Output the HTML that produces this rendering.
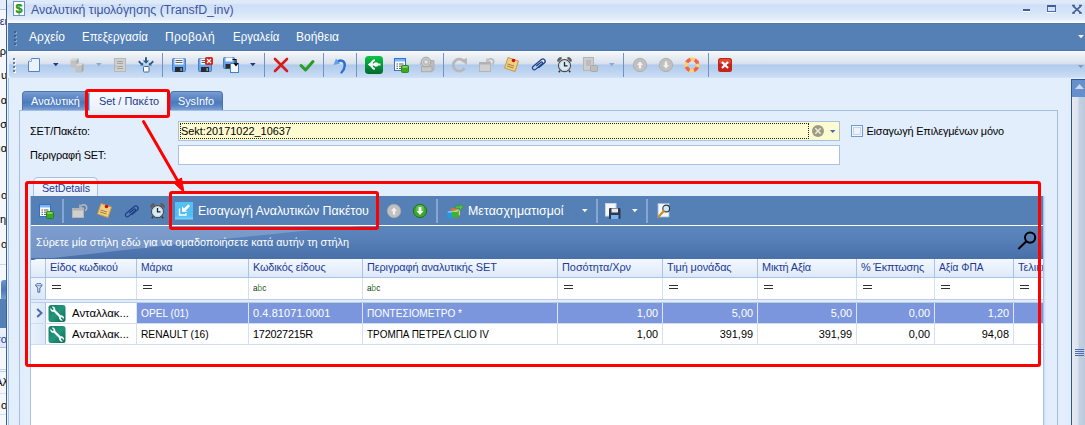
<!DOCTYPE html>
<html><head><meta charset="utf-8">
<style>
*{margin:0;padding:0;box-sizing:border-box}
html,body{width:1085px;height:425px;overflow:hidden;background:#e3eefc;font-family:"Liberation Sans",sans-serif;position:relative}
.a{position:absolute}
.t{position:absolute;white-space:nowrap;line-height:1}
svg{position:absolute;overflow:visible}
</style></head><body>
<div class="a" style="left:0;top:0;width:6px;height:425px;background:#f4f8fd;overflow:hidden"><div class="a" style="left:0;top:0;width:6px;height:9px;background:#e4edf9"></div><div class="a" style="left:0;top:9px;width:6px;height:1px;background:#b3c8e6"></div><div class="a" style="left:0;top:264px;width:6px;height:1px;background:#c5d6ee"></div><div class="a" style="left:1px;top:280px;width:6px;height:20px;border-radius:3px 0 0 0;background:linear-gradient(#6f95cb,#4d7abb 50%,#7ea2d6)"></div><div class="a" style="left:0;top:299px;width:6px;height:29px;background:#5580b5"></div><div class="a" style="left:0;top:328px;width:6px;height:19px;background:linear-gradient(#edf3fc,#dce7f7)"></div><div class="a" style="left:0;top:347px;width:6px;height:1px;background:#a9c2e6"></div><div class="a" style="left:0;top:369px;width:6px;height:1px;background:#bcd0ec"></div><div class="a" style="left:0;top:371px;width:6px;height:1px;background:#bcd0ec"></div><div class="a" style="left:0;top:393px;width:6px;height:1px;background:#d3e0f2"></div><div class="a" style="left:0;top:414px;width:6px;height:1px;background:#d3e0f2"></div><div class="t" style="right:-1px;top:16px;font-size:11px;color:#1b2d7a">ει</div><div class="t" style="right:0px;top:46px;font-size:11px;color:#000">ρ</div><div class="t" style="right:-1px;top:70px;font-size:11px;color:#000">υ</div><div class="t" style="right:-1px;top:95px;font-size:11px;color:#000">α</div><div class="t" style="right:-1px;top:119px;font-size:11px;color:#000">σ</div><div class="t" style="right:-1px;top:143px;font-size:11px;color:#000">μα</div><div class="t" style="right:-1px;top:190px;font-size:11px;color:#000">ο</div><div class="t" style="right:0px;top:214px;font-size:11px;color:#000">η</div><div class="t" style="right:-1px;top:239px;font-size:11px;color:#000">ο</div><div class="t" style="right:-1px;top:334px;font-size:11px;color:#1b3a94">σο</div><div class="t" style="right:-2px;top:377px;font-size:11px;color:#000">Αλ</div><div class="t" style="right:-1px;top:400px;font-size:11px;color:#000">ο</div></div>
<div class="a" style="left:6px;top:0;width:1px;height:425px;background:#3d6097"></div>
<div class="a" style="left:7px;top:0;width:1078px;height:23px;background:linear-gradient(#e0ebf9 0,#dfeaf9 3px,#cfdff6 5px,#d5e4f8 12px,#e3edfa 19px,#eef5fd 21px,#fbfdff 22.5px)"></div>
<div class="a" style="left:13px;top:1px;width:12px;height:15px;background:#fff;border:1px solid #6f93c6"></div>
<div class="t" style="left:15.5px;top:2.5px;font-size:12.5px;font-weight:bold;color:#2f9a1f;text-shadow:0 0 0.4px #2f9a1f">$</div>
<div class="t" style="left:31.0px;top:4.0px;font-size:12.3px;color:#3a55a0">Αναλυτική τιμολόγησης (TransfD_inv)</div>
<div class="a" style="left:1023px;top:9px;width:7px;height:2px;background:#3f5f9a;box-shadow:0 1px 0 #fff"></div>
<div class="a" style="left:1047px;top:5px;width:9px;height:7px;border:1px solid #4a6aa2;border-top:2px solid #3f5f9a;box-shadow:0 1px 0 #fff"></div>
<svg style="left:1072px;top:5px" width="10" height="9"><path d="M1 1L9 8.2M9 1L1 8.2" stroke="#fff" stroke-width="1.8" transform="translate(0,1)"/><path d="M1 1L9 8.2M9 1L1 8.2" stroke="#4565a0" stroke-width="1.8"/><path d="M0 0.3H3M7 0.3H10M0 8.2H3M7 8.2H10" stroke="#3f5f9a" stroke-width="1.2"/></svg>
<div class="a" style="left:8px;top:23px;width:1077px;height:28px;background:#5580b5"></div>
<div class="a" style="left:8px;top:23px;width:1077px;height:1px;background:#4d78b0"></div>
<div class="a" style="left:8px;top:50px;width:1077px;height:1px;background:#4b75ae"></div>
<div class="a" style="left:14px;top:31px;width:2px;height:2px;background:#3f5f8f;box-shadow:1px 1px 0 #8faad0"></div>
<div class="a" style="left:14px;top:35px;width:2px;height:2px;background:#3f5f8f;box-shadow:1px 1px 0 #8faad0"></div>
<div class="a" style="left:14px;top:39px;width:2px;height:2px;background:#3f5f8f;box-shadow:1px 1px 0 #8faad0"></div>
<div class="a" style="left:14px;top:42.6px;width:2px;height:2px;background:#3f5f8f;box-shadow:1px 1px 0 #8faad0"></div>
<div class="t" style="left:29.0px;top:31.0px;font-size:12px;color:#fff;letter-spacing:0.029px">Αρχείο</div>
<div class="t" style="left:82.0px;top:31.0px;font-size:12px;color:#fff;transform:scaleX(0.9546);transform-origin:0 0">Επεξεργασία</div>
<div class="t" style="left:165.0px;top:31.0px;font-size:12px;color:#fff;letter-spacing:0.259px">Προβολή</div>
<div class="t" style="left:232.5px;top:31.0px;font-size:12px;color:#fff;transform:scaleX(0.9542);transform-origin:0 0">Εργαλεία</div>
<div class="t" style="left:296.0px;top:31.0px;font-size:12px;color:#fff">Βοήθεια</div>
<svg style="left:1078px;top:35px" width="6" height="4"><path d="M0 0H6L3 3.2Z" fill="#eef3fa"/></svg>
<div class="a" style="left:9px;top:51px;width:1076px;height:27px;border-radius:4px 0 0 4px;background:linear-gradient(#ffffff 0,#f4f6f9 1px,#e9edf3 6px,#dbe3ee 12px,#d3dded 13px,#afcaec 14px,#bcd3f0 20px,#c8dbf4 25px,#d3e3f7 27px)"></div>
<div class="a" style="left:13px;top:58px;width:2px;height:2px;background:#5f7fad;box-shadow:1px 1px 0 #fff"></div>
<div class="a" style="left:13px;top:62px;width:2px;height:2px;background:#5f7fad;box-shadow:1px 1px 0 #fff"></div>
<div class="a" style="left:13px;top:66px;width:2px;height:2px;background:#5f7fad;box-shadow:1px 1px 0 #fff"></div>
<div class="a" style="left:13px;top:70px;width:2px;height:2px;background:#5f7fad;box-shadow:1px 1px 0 #fff"></div>
<svg style="left:28px;top:58px" width="13" height="15"><path d="M3.5 0.5H11.5V13.5H0.5V3.5Z" fill="#eaf2fb" stroke="#5484c6"/><path d="M0.5 3.5H3.5V0.5" fill="#fff" stroke="#5484c6" stroke-width="0.6"/></svg>
<svg style="left:53px;top:63px" width="6" height="4"><path d="M0 0H5.6L2.8 3.2Z" fill="#1c3a82"/></svg>
<svg style="left:70px;top:58px" width="15" height="15"><path d="M0.5 2.5L2.5 0.5H8.5V7.5L6.5 9.5H0.5Z" fill="#c2c2c2"/><path d="M0.5 2.5L2.5 0.5H8.5L6.5 2.5Z" fill="#dadada"/><path d="M6.5 2.5L8.5 0.5V7.5L6.5 9.5Z" fill="#a9a9a9"/><path d="M5.5 7.5L7.5 5.5H13.5V12.5L11.5 14.5H5.5Z" fill="#c2c2c2"/><path d="M5.5 7.5L7.5 5.5H13.5L11.5 7.5Z" fill="#dadada"/><path d="M11.5 7.5L13.5 5.5V12.5L11.5 14.5Z" fill="#a9a9a9"/></svg>
<svg style="left:96px;top:63px" width="6" height="4"><path d="M0 0H5.6L2.8 3.2Z" fill="#8ea9c9"/></svg>
<svg style="left:114px;top:58px" width="12" height="14"><rect x="0.5" y="0.5" width="11" height="13" fill="#d0d0d0" stroke="#b8b8b8"/><path d="M3 3.5H9M3 5.5H9M3.5 8.5H9M3 10.5H9" stroke="#a3a3a3"/><path d="M0.5 7L2.5 8.5L0.5 10" fill="none" stroke="#b0b0b0" stroke-width="0.8"/></svg>
<svg style="left:138px;top:57px" width="17" height="16"><g stroke="#fff" stroke-width="3.2" opacity="0.7" fill="none"><path d="M8 0.5V5M1 4.5L4 7.5M15 4.5L12 7.5"/></g><path d="M8 0.3V5" stroke="#285a8f" stroke-width="2"/><path d="M4.8 3.6L8 6.8L11.2 3.6Z" fill="#285a8f"/><path d="M0.8 4.3L3.6 7.1" stroke="#285a8f" stroke-width="2"/><path d="M1.8 8.6H5.2V5.2Z" fill="#285a8f"/><path d="M15.2 4.3L12.4 7.1" stroke="#285a8f" stroke-width="2"/><path d="M14.2 8.6H10.8V5.2Z" fill="#285a8f"/><rect x="5.5" y="9.5" width="5.5" height="5.5" rx="0.8" fill="#fff" stroke="#3b6a9c"/></svg>
<div class="a" style="left:162px;top:53px;width:1px;height:24px;background:#6f93c3"></div>
<svg style="left:172px;top:58px" width="14" height="14"><rect x="0.5" y="0.5" width="13" height="13" rx="1" fill="#68a6ec" stroke="#3f7fd0"/><rect x="2.5" y="0.5" width="9" height="6" fill="#fafafa"/><path d="M3.5 2.5H10.5M3.5 4.5H10.5" stroke="#666" stroke-width="1"/><rect x="3" y="9" width="8" height="5" fill="#2b2b2b"/><rect x="8.5" y="10" width="1.2" height="3" fill="#8cc0f0"/></svg>
<svg style="left:198px;top:58px" width="14" height="14"><rect x="0.5" y="0.5" width="13" height="13" rx="1" fill="#68a6ec" stroke="#3f7fd0"/><rect x="2.5" y="0.5" width="9" height="6" fill="#fafafa"/><path d="M3.5 2.5H10.5M3.5 4.5H10.5" stroke="#666" stroke-width="1"/><rect x="3" y="9" width="8" height="5" fill="#2b2b2b"/><rect x="8.5" y="10" width="1.2" height="3" fill="#8cc0f0"/></svg>
<svg style="left:205px;top:57px" width="8" height="8"><rect x="0" y="0" width="8" height="8" rx="1.5" fill="#d6261a"/><path d="M2 2L6 6M6 2L2 6" stroke="#fff" stroke-width="1.3"/></svg>
<svg style="left:223px;top:57px" width="16" height="16"><rect x="0.5" y="0.5" width="11" height="11" rx="1" fill="#68a6ec" stroke="#3f7fd0"/><rect x="2.5" y="0.5" width="7" height="4" fill="#fafafa"/><rect x="2.5" y="7" width="6" height="4.5" fill="#2b2b2b"/><rect x="7.5" y="6.5" width="8" height="9" fill="#f4f7fb" stroke="#3f7fd0"/><path d="M9.5 2.5H13V8M11 6L13 8.5L15 6" fill="none" stroke="#000" stroke-width="1.2"/></svg>
<svg style="left:250px;top:63px" width="6" height="4"><path d="M0 0H5.6L2.8 3.2Z" fill="#1c3a82"/></svg>
<div class="a" style="left:264px;top:53px;width:1px;height:24px;background:#6f93c3"></div>
<svg style="left:273px;top:57px" width="16" height="16"><path d="M2 2L14 14M14 2L2 14" stroke="#d81c1c" stroke-width="2.6" stroke-linecap="round"/></svg>
<svg style="left:299px;top:59px" width="16" height="13"><path d="M2 6.5L6.5 11L14 2.5" fill="none" stroke="#2a9c22" stroke-width="3" stroke-linejoin="round" stroke-linecap="round"/></svg>
<div class="a" style="left:323px;top:53px;width:1px;height:24px;background:#6f93c3"></div>
<svg style="left:332px;top:57px" width="15" height="17"><path d="M5 6C7 2 13 3 12.8 8.5C12.6 12 11 14 9.5 15.5" fill="none" stroke="#2c6fd0" stroke-width="2.4" stroke-linecap="round"/><path d="M1.5 8L4 1.5L8 6.5Z" fill="#5ea2ec"/></svg>
<div class="a" style="left:356px;top:53px;width:1px;height:24px;background:#6f93c3"></div>
<svg style="left:365px;top:56px" width="18" height="18"><defs><linearGradient id="gs" x1="0" y1="0" x2="0" y2="1"><stop offset="0" stop-color="#08c545"/><stop offset="1" stop-color="#006a2c"/></linearGradient></defs><rect x="0" y="0" width="18" height="18" rx="3.5" fill="url(#gs)"/><path d="M9.8 3.8A5 5 0 0 0 9.8 13.2" fill="none" stroke="#fff" stroke-width="1.8"/><path d="M4 8.5H15.5" stroke="#fff" stroke-width="2"/><circle cx="11" cy="8.5" r="2.3" fill="#fff"/><path d="M2.8 8.5L6.8 5.6V11.4Z" fill="#fff"/></svg>
<svg style="left:394px;top:58px" width="15" height="15"><rect x="0.5" y="0.5" width="11" height="12" fill="#fff" stroke="#2d74d0"/><rect x="1" y="1" width="10" height="2.5" fill="#7fb6ee"/><path d="M2.5 6H4M5 6H9.5M2.5 8.2H4M5 8.2H9.5M2.5 10.4H4M5 10.4H8" stroke="#444" stroke-width="0.9"/><rect x="7.5" y="7.5" width="7" height="7" rx="1" fill="#3caa1e" stroke="#237a12" stroke-width="0.8"/><rect x="8.5" y="8.2" width="5" height="1.5" fill="#8ee06a"/></svg>
<svg style="left:419px;top:57px" width="16" height="16"><path d="M10.5 3.5H15V12.5L13 14.5H10.5Z" fill="#bdbdbd" stroke="#a9a9a9" stroke-width="0.8"/><rect x="2.5" y="9.7" width="10.5" height="5" fill="#c8c8c8" stroke="#acacac"/><circle cx="7" cy="5" r="4.8" fill="#cacaca" stroke="#a6a6a6"/><circle cx="7" cy="5" r="2.6" fill="none" stroke="#b4b4b4" stroke-width="0.8"/><path d="M6.2 3.6L8.8 5L6.2 6.4Z" fill="#f0f0f0"/><path d="M0.3 7L2.2 5.4V8.6Z" fill="#b4b4b4"/></svg>
<div class="a" style="left:443px;top:53px;width:1px;height:24px;background:#6f93c3"></div>
<svg style="left:452px;top:57px" width="16" height="15"><path d="M12 4.5A6 6 0 1 0 12.5 11" fill="none" stroke="#b8b8b8" stroke-width="2.8"/><path d="M9 3.5L15 1V8Z" fill="#b8b8b8"/></svg>
<svg style="left:479px;top:57px" width="16" height="15"><rect x="0.5" y="5.5" width="11" height="9" fill="#d0d0d0" stroke="#b5b5b5"/><rect x="0.5" y="5.5" width="11" height="2" fill="#b0b0b0"/><path d="M9 3.5A3 3 0 1 1 13 7.5" fill="none" stroke="#b8b8b8" stroke-width="1.6"/><path d="M8 1.5V5H11.5" fill="none" stroke="#b8b8b8" stroke-width="1.4"/></svg>
<svg style="left:504px;top:57px" width="15" height="15"><path d="M4 0.5L14.5 4L11 14.5L0.5 11Z" fill="#f0d080" stroke="#c9974a"/><path d="M3.5 7L10 9M3 9L9.5 11" stroke="#8a6a30" stroke-width="0.8"/><circle cx="9.5" cy="3.5" r="1.8" fill="#d01010"/></svg>
<svg style="left:532px;top:58px" width="14" height="13"><g transform="translate(7,6.5) rotate(-40)"><path d="M-2.5 2.3H5A2.3 2.3 0 0 0 5 -2.3H-5.8A1.9 1.9 0 0 0 -5.8 1.5H3A1 1 0 0 0 3 -0.5H-3" fill="none" stroke="#1f3f86" stroke-width="1.25"/></g></svg>
<svg style="left:557px;top:57px" width="15" height="16"><path d="M1.2 4.6A3.6 3.6 0 0 1 4.6 1.2M10.4 1.2A3.6 3.6 0 0 1 13.8 4.6" fill="none" stroke="#5c5c5c" stroke-width="2.3"/><path d="M3 13.6L1.8 15.2M12 13.6L13.2 15.2" stroke="#333" stroke-width="1.5"/><circle cx="7.5" cy="8.6" r="6" fill="#d6edf9" stroke="#4a4a4a" stroke-width="1.2"/><circle cx="7.5" cy="8.6" r="4.9" fill="none" stroke="#cfcfcf" stroke-width="1"/><path d="M7.5 5V8.9H10.5" fill="none" stroke="#222" stroke-width="1.3"/></svg>
<svg style="left:583px;top:57px" width="15" height="15"><rect x="0.5" y="0.5" width="10" height="13" fill="#cdcdcd" stroke="#b5b5b5"/><path d="M3 4H8M3 6H8M3 8H8" stroke="#aaa"/><rect x="7.5" y="8.5" width="7" height="6" rx="1" fill="#bdbdbd" stroke="#aaa"/></svg>
<svg style="left:609px;top:63px" width="6" height="4"><path d="M0 0H5.6L2.8 3.2Z" fill="#8ea9c9"/></svg>
<div class="a" style="left:623px;top:53px;width:1px;height:24px;background:#6f93c3"></div>
<svg style="left:633px;top:58px" width="14" height="14"><circle cx="7" cy="7" r="6.7" fill="#c0c0c0" stroke="#aaa" stroke-width="0.8"/><path d="M7 3.5L10 7H8.2V10.5H5.8V7H4Z" fill="#f2f2f2"/></svg>
<svg style="left:659px;top:58px" width="14" height="14"><circle cx="7" cy="7" r="6.7" fill="#c0c0c0" stroke="#aaa" stroke-width="0.8"/><path d="M7 10.5L10 7H8.2V3.5H5.8V7H4Z" fill="#f2f2f2"/></svg>
<svg style="left:684px;top:57px" width="16" height="16"><circle cx="8" cy="8" r="5.8" fill="none" stroke="#f9d46a" stroke-width="3.6"/><circle cx="8" cy="8" r="5.8" fill="none" stroke="#f2605c" stroke-width="3.6" stroke-dasharray="4.555 4.555" stroke-dashoffset="-2.28"/></svg>
<div class="a" style="left:708px;top:53px;width:1px;height:24px;background:#6f93c3"></div>
<svg style="left:718px;top:58px" width="14" height="14"><rect x="0" y="0" width="14" height="14" rx="2.5" fill="#c42419"/><rect x="1" y="1" width="12" height="5" rx="2" fill="#de4a3a"/><path d="M4 4L10 10M10 4L4 10" stroke="#fff" stroke-width="2.2"/></svg>
<svg style="left:1078px;top:65px" width="6" height="4"><path d="M0 0H5.6L2.8 3.2Z" fill="#7f9cc4"/></svg>
<div class="a" style="left:7px;top:78px;width:1px;height:347px;background:#eaf2fd"></div>
<div class="a" style="left:8px;top:78px;width:1px;height:347px;background:#a8c2e7"></div>
<div class="a" style="left:1071px;top:79px;width:14px;height:346px;background:linear-gradient(90deg,#2f5894 0,#2f5894 1px,#e6eaf0 1px,#dde3eb 7px,#c3d0e1 8px,#bccadd 14px)"></div>
<div class="a" style="left:1071px;top:79px;width:14px;height:18px;background:#6590cc;border-left:1px solid #2f5894;border-top:1px solid #2f5894"></div>
<svg style="left:1075px;top:84px" width="9" height="5"><path d="M0 5L4.5 0L9 5Z" fill="#c8d8ee"/></svg>
<div class="a" style="left:1075px;top:349px;width:9px;height:1px;background:#4d6ea8"></div>
<div class="a" style="left:1075px;top:351px;width:9px;height:1px;background:#4d6ea8"></div>
<div class="a" style="left:1075px;top:353px;width:9px;height:1px;background:#4d6ea8"></div>
<div class="a" style="left:1075px;top:355px;width:9px;height:1px;background:#4d6ea8"></div>
<div class="a" style="left:22px;top:91px;width:67px;height:19px;border-radius:4px 4px 0 0;background:linear-gradient(#7b9fd2 0,#6990ca 3px,#5683c3 8px,#4b79bb 10px,#5b86c3 14px,#87a8da 19px);border:1px solid #4a74b5;border-bottom:none"></div>
<div class="t" style="left:31.0px;top:96.0px;font-size:10.9px;color:#fff;letter-spacing:0.090px">Αναλυτική</div>
<div class="a" style="left:89px;top:92px;width:81px;height:20px;background:linear-gradient(#f7faff,#e9f0fb);border-left:1px solid #a7c0e4;border-right:1px solid #a7c0e4"></div>
<div class="t" style="left:99.0px;top:96.0px;font-size:10.9px;color:#1e3a8a">Set / Πακέτο</div>
<div class="a" style="left:170px;top:91px;width:53px;height:19px;border-radius:4px 4px 0 0;background:linear-gradient(#7b9fd2 0,#6990ca 3px,#5683c3 8px,#4b79bb 10px,#5b86c3 14px,#87a8da 19px);border:1px solid #4a74b5;border-bottom:none"></div>
<div class="t" style="left:178.0px;top:96.0px;font-size:10.9px;color:#fff;letter-spacing:-0.047px">SysInfo</div>
<div class="a" style="left:19px;top:110px;width:1039px;height:330px;border:1px solid #a3bde3;background:#e3eefc"></div>
<div class="a" style="left:90px;top:110px;width:79px;height:2px;background:#e9f0fb"></div>
<div class="t" style="left:30.0px;top:126.0px;font-size:10.9px;color:#000;letter-spacing:-0.125px">ΣΕΤ/Πακέτο:</div>
<div class="t" style="left:30.0px;top:150.0px;font-size:10.9px;color:#000;letter-spacing:-0.173px">Περιγραφή SET:</div>
<div class="a" style="left:178px;top:121px;width:662px;height:20px;border:1px solid #a9c0e1;background:#fefbd0"></div>
<div class="a" style="left:180px;top:123px;width:629px;height:16px;border:1px dotted #222"></div>
<div class="t" style="left:181.0px;top:126.0px;font-size:10.9px;color:#000;letter-spacing:0.020px">Sekt:20171022_10637</div>
<svg style="left:812px;top:125px" width="12" height="12"><circle cx="6" cy="6" r="6" fill="#9c9c86"/><path d="M3.3 3.3L8.7 8.7M8.7 3.3L3.3 8.7" stroke="#f4f2dc" stroke-width="1.3"/></svg>
<svg style="left:830px;top:130px" width="6" height="4"><path d="M0 0H5.5L2.75 3Z" fill="#3b6ec0"/></svg>
<div class="a" style="left:178px;top:145px;width:662px;height:20px;border:1px solid #a9c0e1;background:#fff"></div>
<div class="a" style="left:851px;top:125px;width:12px;height:12px;border:1px solid #6d9ad8;background:#f4f8fd"></div>
<div class="a" style="left:853px;top:127px;width:8px;height:8px;border:1px solid #c3d5ee;background:#eef3fb"></div>
<div class="t" style="left:866.5px;top:126.0px;font-size:10.9px;color:#000;letter-spacing:-0.161px">Εισαγωγή Επιλεγμένων μόνο</div>
<div class="a" style="left:33px;top:177px;width:65px;height:21px;border:1px solid #a6c0e4;border-bottom:none;border-radius:5px 5px 0 0;background:linear-gradient(#f8fbff,#e6eefb)"></div>
<div class="t" style="left:42.0px;top:183.0px;font-size:10.7px;color:#1e3c96;letter-spacing:-0.072px">SetDetails</div>
<div class="a" style="left:30px;top:196px;width:1014px;height:240px;background:#fff;border-left:1px solid #a9c2e6;border-right:1px solid #a9c2e6"></div>
<div class="a" style="left:1044px;top:196px;width:2px;height:240px;background:linear-gradient(90deg,#c9daf2,#e3eefc)"></div>
<div class="a" style="left:31px;top:196px;width:1012px;height:29px;background:#5580b5"></div>
<div class="a" style="left:31px;top:225px;width:1012px;height:1px;background:#fff"></div>
<svg style="left:39px;top:204px" width="15" height="15"><rect x="0.5" y="0.5" width="11" height="12" fill="#fff" stroke="#2d74d0"/><rect x="1" y="1" width="10" height="2.5" fill="#7fb6ee"/><path d="M2.5 6H4M5 6H9.5M2.5 8.2H4M5 8.2H9.5M2.5 10.4H4M5 10.4H8" stroke="#444" stroke-width="0.9"/><rect x="7.5" y="7.5" width="7" height="7" rx="1" fill="#3caa1e" stroke="#237a12" stroke-width="0.8"/><rect x="8.5" y="8.2" width="5" height="1.5" fill="#8ee06a"/></svg>
<div class="a" style="left:62px;top:199px;width:2px;height:24px;background:#88a6d1"></div>
<svg style="left:72px;top:203px" width="16" height="15"><rect x="0.5" y="5.5" width="11" height="9" fill="#d0d0d0" stroke="#b5b5b5"/><rect x="0.5" y="5.5" width="11" height="2" fill="#b0b0b0"/><path d="M9 3.5A3 3 0 1 1 13 7.5" fill="none" stroke="#b8b8b8" stroke-width="1.6"/><path d="M8 1.5V5H11.5" fill="none" stroke="#b8b8b8" stroke-width="1.4"/></svg>
<svg style="left:97px;top:203px" width="15" height="15"><path d="M4 0.5L14.5 4L11 14.5L0.5 11Z" fill="#f0d080" stroke="#c9974a"/><path d="M3.5 7L10 9M3 9L9.5 11" stroke="#8a6a30" stroke-width="0.8"/><circle cx="9.5" cy="3.5" r="1.8" fill="#d01010"/></svg>
<svg style="left:125px;top:205px" width="14" height="13"><g transform="translate(7,6.5) rotate(-40)"><path d="M-2.5 2.3H5A2.3 2.3 0 0 0 5 -2.3H-5.8A1.9 1.9 0 0 0 -5.8 1.5H3A1 1 0 0 0 3 -0.5H-3" fill="none" stroke="#1f3f86" stroke-width="1.25"/></g></svg>
<svg style="left:150px;top:203px" width="15" height="16"><path d="M1.2 4.6A3.6 3.6 0 0 1 4.6 1.2M10.4 1.2A3.6 3.6 0 0 1 13.8 4.6" fill="none" stroke="#5c5c5c" stroke-width="2.3"/><path d="M3 13.6L1.8 15.2M12 13.6L13.2 15.2" stroke="#333" stroke-width="1.5"/><circle cx="7.5" cy="8.6" r="6" fill="#d6edf9" stroke="#4a4a4a" stroke-width="1.2"/><circle cx="7.5" cy="8.6" r="4.9" fill="none" stroke="#cfcfcf" stroke-width="1"/><path d="M7.5 5V8.9H10.5" fill="none" stroke="#222" stroke-width="1.3"/></svg>
<svg style="left:175px;top:202px" width="18" height="18"><defs><linearGradient id="ic" x1="0" y1="0" x2="0" y2="1"><stop offset="0" stop-color="#56c0f4"/><stop offset="0.8" stop-color="#52bdf2"/><stop offset="1" stop-color="#7fd6fa"/></linearGradient></defs><rect x="0" y="0" width="18" height="17.5" fill="url(#ic)"/><path d="M4.5 6.5V13H11V11.3" fill="none" stroke="#fff" stroke-width="1.4"/><path d="M14.2 3.2L9.4 8" stroke="#fff" stroke-width="2.6"/><path d="M7 9.8V4.6L12.2 9.8Z" fill="#fff"/></svg>
<div class="t" style="left:198.0px;top:205.0px;font-size:12.4px;color:#fff">Εισαγωγή Αναλυτικών Πακέτου</div>
<svg style="left:387px;top:204px" width="14" height="14"><circle cx="7" cy="7" r="6.7" fill="#c0c0c0" stroke="#aaa" stroke-width="0.8"/><path d="M7 3.5L10 7H8.2V10.5H5.8V7H4Z" fill="#f2f2f2"/></svg>
<svg style="left:413px;top:204px" width="14" height="14"><circle cx="7" cy="7" r="6.6" fill="#3aa82a" stroke="#1d6b16" stroke-width="0.9"/><circle cx="7" cy="5" r="4" fill="#6fd255" opacity="0.6"/><path d="M7 11L10.5 7H8.4V3H5.6V7H3.5Z" fill="#fff"/></svg>
<div class="a" style="left:436px;top:199px;width:2px;height:24px;background:#88a6d1"></div>
<svg style="left:447px;top:203px" width="17" height="15"><rect x="3.5" y="5" width="6.5" height="4.5" rx="1.5" fill="#e4674c"/><rect x="8.5" y="6.5" width="4.5" height="6" rx="1" fill="#f2c77e"/><path d="M0.3 9.6L1.6 8.3H7.3V13.5L6 14.8H0.3Z" fill="#1f9ae6"/><path d="M0.3 9.6L1.6 8.3H7.3L6 9.6Z" fill="#8ad6fb"/><path d="M5 9L6.5 7.6H11.8V13.2L10.3 14.6H5Z" fill="#3fb12a"/><path d="M5 9L6.5 7.6H11.8L10.3 9Z" fill="#9be77a"/><path d="M8.6 3H12.6V0.8L16.3 4.2L12.6 7.6V5.4H8.6Z" fill="#4fc43a" stroke="#2c8e22" stroke-width="0.5"/></svg>
<div class="t" style="left:468.0px;top:205.0px;font-size:12.4px;color:#fff;letter-spacing:0.023px">Μετασχηματισμοί</div>
<svg style="left:582px;top:209px" width="6" height="4"><path d="M0 0H5.6L2.8 3.2Z" fill="#fff"/></svg>
<div class="a" style="left:596px;top:199px;width:2px;height:24px;background:#88a6d1"></div>
<svg style="left:605px;top:203px" width="16" height="16"><rect x="0.5" y="0.5" width="10.5" height="12.5" fill="#f4f6fa" stroke="#c9d3e2"/><rect x="4" y="5" width="11.5" height="11" rx="1" fill="#2d3a4e"/><rect x="6.5" y="5.5" width="6.5" height="4" fill="#e6e9ee"/><rect x="6" y="12" width="7.5" height="4" fill="#6fb3f0"/></svg>
<svg style="left:632px;top:209px" width="6" height="4"><path d="M0 0H5.6L2.8 3.2Z" fill="#fff"/></svg>
<div class="a" style="left:646px;top:199px;width:2px;height:24px;background:#88a6d1"></div>
<svg style="left:657px;top:203px" width="14" height="15"><rect x="1" y="0.5" width="11" height="13.5" fill="#f5f8fc" stroke="#9fb7d8" stroke-width="0.8"/><circle cx="9.2" cy="5.5" r="3.4" fill="#cfe8f8" stroke="#333" stroke-width="1.1"/><path d="M6.8 8L1.5 13.8" stroke="#d08a2a" stroke-width="2.2" stroke-linecap="round"/></svg>
<div class="a" style="left:31px;top:226px;width:1012px;height:34px;background:linear-gradient(#5d86bd 0,#5680b7 38%,#4a70aa 94%,#4a70aa 100%)"></div>
<svg style="left:31px;top:226px" width="1012" height="32"><defs><linearGradient id="gp" x1="0" y1="0" x2="0" y2="1"><stop offset="0" stop-color="#7d9dce"/><stop offset="1" stop-color="#7292c5"/></linearGradient></defs><path d="M0 0H330C250 6 130 20 22 32H0Z" fill="url(#gp)"/></svg>
<div class="t" style="left:36.0px;top:237.0px;font-size:10.85px;color:#fff">Σύρετε μία στήλη εδώ για να ομαδοποιήσετε κατά αυτήν τη στήλη</div>
<svg style="left:1019px;top:232px" width="14" height="18"><circle cx="11.1" cy="5.6" r="5.1" fill="none" stroke="#000" stroke-width="2"/><path d="M-0.6 17L7.4 9.3" stroke="#000" stroke-width="2"/></svg>
<div class="a" style="left:31px;top:258.5px;width:1012px;height:19.5px;background:linear-gradient(#f3f7fe 0,#e9f1fc 50%,#dbe7f8 100%);border-radius:6px 0 0 0"></div>
<div class="a" style="left:31px;top:277px;width:1012px;height:1px;background:#a9c2e6"></div>
<div class="a" style="left:45px;top:259px;width:1px;height:19px;background:#a9c2e6"></div>
<div class="a" style="left:136px;top:259px;width:1px;height:19px;background:#a9c2e6"></div>
<div class="a" style="left:248px;top:259px;width:1px;height:19px;background:#a9c2e6"></div>
<div class="a" style="left:362px;top:259px;width:1px;height:19px;background:#a9c2e6"></div>
<div class="a" style="left:557px;top:259px;width:1px;height:19px;background:#a9c2e6"></div>
<div class="a" style="left:662px;top:259px;width:1px;height:19px;background:#a9c2e6"></div>
<div class="a" style="left:757px;top:259px;width:1px;height:19px;background:#a9c2e6"></div>
<div class="a" style="left:856px;top:259px;width:1px;height:19px;background:#a9c2e6"></div>
<div class="a" style="left:934px;top:259px;width:1px;height:19px;background:#a9c2e6"></div>
<div class="a" style="left:1013px;top:259px;width:1px;height:19px;background:#a9c2e6"></div>
<div class="a" style="left:1013px;top:258px;width:30px;height:20px;overflow:hidden">
<div class="t" style="left:5.0px;top:4.0px;font-size:10.9px;color:#1c3a94">Τελική Αξία</div>
</div>
<div class="t" style="left:50.0px;top:262.0px;font-size:10.9px;color:#1c3a94;letter-spacing:-0.154px">Είδος κωδικού</div>
<div class="t" style="left:141.0px;top:262.0px;font-size:10.9px;color:#1c3a94;transform:scaleX(0.9496);transform-origin:0 0">Μάρκα</div>
<div class="t" style="left:253.0px;top:262.0px;font-size:10.9px;color:#1c3a94;letter-spacing:-0.133px">Κωδικός είδους</div>
<div class="t" style="left:367.0px;top:262.0px;font-size:10.9px;color:#1c3a94;letter-spacing:-0.108px">Περιγραφή αναλυτικής SET</div>
<div class="t" style="left:562.0px;top:262.0px;font-size:10.9px;color:#1c3a94;letter-spacing:-0.023px">Ποσότητα/Χρν</div>
<div class="t" style="left:667.0px;top:262.0px;font-size:10.9px;color:#1c3a94;letter-spacing:-0.102px">Τιμή μονάδας</div>
<div class="t" style="left:762.0px;top:262.0px;font-size:10.9px;color:#1c3a94;letter-spacing:-0.158px">Μικτή Αξία</div>
<div class="t" style="left:861.0px;top:262.0px;font-size:10.9px;color:#1c3a94;letter-spacing:-0.189px">% Έκπτωσης</div>
<div class="t" style="left:939.0px;top:262.0px;font-size:10.9px;color:#1c3a94;transform:scaleX(0.9329);transform-origin:0 0">Αξία ΦΠΑ</div>
<div class="a" style="left:31px;top:278px;width:14px;height:21px;background:linear-gradient(#eef4fd,#dbe7f8)"></div>
<svg style="left:35px;top:283px" width="8" height="10"><path d="M0.8 1.6Q0.8 0.6 3.8 0.6Q6.8 0.6 6.8 1.6V2.8L4.8 5V9.2H2.8V5L0.8 2.8Z" fill="#e8eff9" stroke="#4a6aa8" stroke-width="1"/><path d="M0.8 2.8H6.8" stroke="#4a6aa8" stroke-width="0.8"/></svg>
<div class="a" style="left:136px;top:278px;width:1px;height:21px;background:#d3e0f3"></div>
<div class="a" style="left:248px;top:278px;width:1px;height:21px;background:#d3e0f3"></div>
<div class="a" style="left:362px;top:278px;width:1px;height:21px;background:#d3e0f3"></div>
<div class="a" style="left:557px;top:278px;width:1px;height:21px;background:#d3e0f3"></div>
<div class="a" style="left:662px;top:278px;width:1px;height:21px;background:#d3e0f3"></div>
<div class="a" style="left:757px;top:278px;width:1px;height:21px;background:#d3e0f3"></div>
<div class="a" style="left:856px;top:278px;width:1px;height:21px;background:#d3e0f3"></div>
<div class="a" style="left:934px;top:278px;width:1px;height:21px;background:#d3e0f3"></div>
<div class="a" style="left:1013px;top:278px;width:1px;height:21px;background:#d3e0f3"></div>
<div class="a" style="left:45px;top:278px;width:1px;height:21px;background:#a9c2e6"></div>
<div class="a" style="left:31px;top:299px;width:1012px;height:1px;background:#b9cdea"></div>
<div class="a" style="left:31px;top:300px;width:1012px;height:2px;background:#e2ecf9"></div>
<div class="a" style="left:31px;top:302px;width:1012px;height:1px;background:#b9cdea"></div>
<div class="a" style="left:52px;top:285px;width:9px;height:1px;background:#303030"></div>
<div class="a" style="left:52px;top:288px;width:9px;height:1px;background:#303030"></div>
<div class="a" style="left:143px;top:285px;width:9px;height:1px;background:#303030"></div>
<div class="a" style="left:143px;top:288px;width:9px;height:1px;background:#303030"></div>
<div class="a" style="left:564px;top:285px;width:9px;height:1px;background:#303030"></div>
<div class="a" style="left:564px;top:288px;width:9px;height:1px;background:#303030"></div>
<div class="a" style="left:669px;top:285px;width:9px;height:1px;background:#303030"></div>
<div class="a" style="left:669px;top:288px;width:9px;height:1px;background:#303030"></div>
<div class="a" style="left:764px;top:285px;width:9px;height:1px;background:#303030"></div>
<div class="a" style="left:764px;top:288px;width:9px;height:1px;background:#303030"></div>
<div class="a" style="left:863px;top:285px;width:9px;height:1px;background:#303030"></div>
<div class="a" style="left:863px;top:288px;width:9px;height:1px;background:#303030"></div>
<div class="a" style="left:941px;top:285px;width:9px;height:1px;background:#303030"></div>
<div class="a" style="left:941px;top:288px;width:9px;height:1px;background:#303030"></div>
<div class="a" style="left:1020px;top:285px;width:9px;height:1px;background:#303030"></div>
<div class="a" style="left:1020px;top:288px;width:9px;height:1px;background:#303030"></div>
<div class="t" style="left:252.7px;top:283.3px;font-size:9.8px;transform:scaleX(0.84);transform-origin:0 0;color:#2a2a2a">a<span style="color:#3a9a1a">b</span>c</div>
<div class="t" style="left:366.7px;top:283.3px;font-size:9.8px;transform:scaleX(0.84);transform-origin:0 0;color:#2a2a2a">a<span style="color:#3a9a1a">b</span>c</div>
<div class="a" style="left:31px;top:303px;width:14px;height:20px;background:linear-gradient(90deg,#eaf1fc,#dde8f8)"></div>
<div class="a" style="left:45px;top:303px;width:1px;height:21px;background:#a9c2e6"></div>
<div class="a" style="left:137px;top:303px;width:906px;height:20px;background:#7b96dc"></div>
<svg style="left:36px;top:308px" width="7" height="10"><path d="M1.2 1L5.5 5L1.2 9" fill="none" stroke="#4a6aa8" stroke-width="2"/></svg>
<div class="a" style="left:31px;top:323px;width:1012px;height:1px;background:#d0ddf1"></div>
<div class="a" style="left:136px;top:303px;width:1px;height:20px;background:#dbe5f5"></div>
<div class="a" style="left:248px;top:303px;width:1px;height:20px;background:#dbe5f5"></div>
<div class="a" style="left:362px;top:303px;width:1px;height:20px;background:#dbe5f5"></div>
<div class="a" style="left:557px;top:303px;width:1px;height:20px;background:#dbe5f5"></div>
<div class="a" style="left:662px;top:303px;width:1px;height:20px;background:#dbe5f5"></div>
<div class="a" style="left:757px;top:303px;width:1px;height:20px;background:#dbe5f5"></div>
<div class="a" style="left:856px;top:303px;width:1px;height:20px;background:#dbe5f5"></div>
<div class="a" style="left:934px;top:303px;width:1px;height:20px;background:#dbe5f5"></div>
<div class="a" style="left:1013px;top:303px;width:1px;height:20px;background:#dbe5f5"></div>
<svg style="left:48px;top:305px" width="18" height="17"><defs><linearGradient id="wr303" x1="0" y1="0" x2="1" y2="1"><stop offset="0" stop-color="#0f7f66"/><stop offset="0.5" stop-color="#23957b"/><stop offset="1" stop-color="#0a6854"/></linearGradient></defs><rect x="0.5" y="0" width="17" height="17" rx="2.5" fill="url(#wr303)"/><g transform="translate(9.2,8.6) rotate(45)"><rect x="-5" y="-1.1" width="10" height="2.2" fill="#fff"/><circle cx="-6.2" cy="0" r="2.5" fill="#fff"/><circle cx="6.2" cy="0" r="2.5" fill="#fff"/><rect x="-9" y="-0.9" width="3.3" height="1.8" fill="#16856b"/><rect x="5.7" y="-0.9" width="3.3" height="1.8" fill="#16856b"/></g></svg>
<div class="t" style="left:72.0px;top:308.0px;font-size:10.9px;color:#000;transform:scaleX(1.0456);transform-origin:0 0">Ανταλλακ...</div>
<div class="t" style="left:141.0px;top:308.0px;font-size:10.9px;color:#fff;transform:scaleX(0.9325);transform-origin:0 0">OPEL (01)</div>
<div class="t" style="left:253.0px;top:308.0px;font-size:10.9px;color:#fff;letter-spacing:0.128px">0.4.81071.0001</div>
<div class="t" style="left:367.0px;top:308.0px;font-size:10.9px;color:#fff;transform:scaleX(0.9282);transform-origin:0 0">ΠΟΝΤΕΣΙΟΜΕΤΡΟ *</div>
<div class="t" style="left:636.8px;top:308.0px;font-size:10.9px;color:#fff">1,00</div>
<div class="t" style="left:731.8px;top:308.0px;font-size:10.9px;color:#fff">5,00</div>
<div class="t" style="left:830.8px;top:308.0px;font-size:10.9px;color:#fff">5,00</div>
<div class="t" style="left:908.8px;top:308.0px;font-size:10.9px;color:#fff">0,00</div>
<div class="t" style="left:987.8px;top:308.0px;font-size:10.9px;color:#fff">1,20</div>
<div class="a" style="left:31px;top:324px;width:14px;height:20px;background:linear-gradient(90deg,#eaf1fc,#dde8f8)"></div>
<div class="a" style="left:45px;top:324px;width:1px;height:21px;background:#a9c2e6"></div>
<div class="a" style="left:31px;top:344px;width:1012px;height:1px;background:#d0ddf1"></div>
<div class="a" style="left:136px;top:324px;width:1px;height:20px;background:#d3e0f3"></div>
<div class="a" style="left:248px;top:324px;width:1px;height:20px;background:#d3e0f3"></div>
<div class="a" style="left:362px;top:324px;width:1px;height:20px;background:#d3e0f3"></div>
<div class="a" style="left:557px;top:324px;width:1px;height:20px;background:#d3e0f3"></div>
<div class="a" style="left:662px;top:324px;width:1px;height:20px;background:#d3e0f3"></div>
<div class="a" style="left:757px;top:324px;width:1px;height:20px;background:#d3e0f3"></div>
<div class="a" style="left:856px;top:324px;width:1px;height:20px;background:#d3e0f3"></div>
<div class="a" style="left:934px;top:324px;width:1px;height:20px;background:#d3e0f3"></div>
<div class="a" style="left:1013px;top:324px;width:1px;height:20px;background:#d3e0f3"></div>
<svg style="left:48px;top:326px" width="18" height="17"><defs><linearGradient id="wr324" x1="0" y1="0" x2="1" y2="1"><stop offset="0" stop-color="#0f7f66"/><stop offset="0.5" stop-color="#23957b"/><stop offset="1" stop-color="#0a6854"/></linearGradient></defs><rect x="0.5" y="0" width="17" height="17" rx="2.5" fill="url(#wr324)"/><g transform="translate(9.2,8.6) rotate(45)"><rect x="-5" y="-1.1" width="10" height="2.2" fill="#fff"/><circle cx="-6.2" cy="0" r="2.5" fill="#fff"/><circle cx="6.2" cy="0" r="2.5" fill="#fff"/><rect x="-9" y="-0.9" width="3.3" height="1.8" fill="#16856b"/><rect x="5.7" y="-0.9" width="3.3" height="1.8" fill="#16856b"/></g></svg>
<div class="t" style="left:72.0px;top:329.0px;font-size:10.9px;color:#000;transform:scaleX(1.0456);transform-origin:0 0">Ανταλλακ...</div>
<div class="t" style="left:141.0px;top:329.0px;font-size:10.9px;color:#000;transform:scaleX(0.9374);transform-origin:0 0">RENAULT (16)</div>
<div class="t" style="left:253.0px;top:329.0px;font-size:10.9px;color:#000;letter-spacing:-0.239px">172027215R</div>
<div class="t" style="left:367.0px;top:329.0px;font-size:10.9px;color:#000;transform:scaleX(0.9120);transform-origin:0 0">ΤΡΟΜΠΑ ΠΕΤΡΕΛ CLIO IV</div>
<div class="t" style="left:636.8px;top:329.0px;font-size:10.9px;color:#000">1,00</div>
<div class="t" style="left:719.7px;top:329.0px;font-size:10.9px;color:#000">391,99</div>
<div class="t" style="left:818.7px;top:329.0px;font-size:10.9px;color:#000">391,99</div>
<div class="t" style="left:908.8px;top:329.0px;font-size:10.9px;color:#000">0,00</div>
<div class="t" style="left:981.7px;top:329.0px;font-size:10.9px;color:#000">94,08</div>
<div class="a" style="left:85px;top:89px;width:85px;height:29px;border:3px solid #f00;border-radius:3px"></div>
<div class="a" style="left:25px;top:181px;width:1016px;height:186px;border:3px solid #f00;border-radius:3px"></div>
<div class="a" style="left:169px;top:191px;width:210px;height:39px;border:3px solid #f00;border-radius:3px"></div>
<svg style="left:0;top:0" width="1085" height="425"><path d="M143.5 121.5L179.5 184" stroke="#f00" stroke-width="3" stroke-linecap="round"/><path d="M173.5 182.5L184 192.5L181.5 178Z" fill="#f00" stroke="#f00" stroke-width="1" stroke-linejoin="round"/></svg>
</body></html>
